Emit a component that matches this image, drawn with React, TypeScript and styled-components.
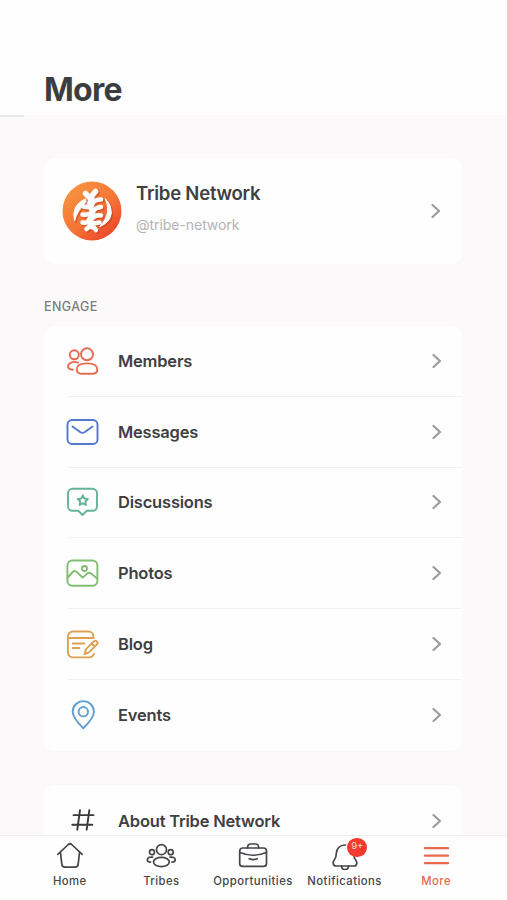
import React from "react";
import styled, { createGlobalStyle } from "styled-components";

const GlobalStyle = createGlobalStyle`
  * { box-sizing: border-box; }
  html, body { margin: 0; padding: 0; overflow: hidden; }
  body { font-family: Inter, "Liberation Sans", sans-serif; color: #3e4043; background: #fbf9fa; }
`;

const Screen = styled.div`
  height: 900px;
  display: flex;
  flex-direction: column;
  background: #fbf9fa;
  overflow: hidden;
`;
const Header = styled.header`
  flex: none;
  height: 115px;
  padding: 69px 44px 0;
  background: #fefefe;
`;
const Title = styled.h1`
  margin: 0;
  font-size: 32px;
  line-height: 41px;
  font-weight: 700;
  letter-spacing: -0.7px;
  color: #3b3e41;
`;
const HeaderRule = styled.div`
  flex: none;
  width: 24px;
  height: 2px;
  background: #e9e8e9;
`;
const Content = styled.main`
  flex: 1;
  min-height: 0;
  overflow: hidden;
  padding: 41px 45px 0 44px;
`;
const Card = styled.section`
  background: #fefefe;
  border-radius: 10px;
`;
const Profile = styled(Card)`
  height: 106px;
  display: flex;
  align-items: center;
  padding: 0 21px 1px 18px;
`;
const ProfileText = styled.div`
  flex: 1;
  padding: 0 0 6px 14px;
`;
const Name = styled.div`
  font-size: 18.5px;
  line-height: 24px;
  font-weight: 600;
  letter-spacing: -0.22px;
`;
const Handle = styled.div`
  margin-top: 10px;
  font-size: 14px;
  line-height: 20px;
  letter-spacing: -0.05px;
  color: #b4b3b5;
`;
const SectionLabel = styled.h2`
  margin: 34px 0 11px;
  font-size: 12.5px;
  line-height: 17px;
  font-weight: 500;
  letter-spacing: 0.4px;
  color: #7d7c7f;
`;
const Row = styled.div`
  height: 70.8px;
  display: flex;
  align-items: stretch;
  padding-left: 20px;
  &:last-child > div { border-bottom: none; }
`;
const RowBody = styled.div`
  flex: 1;
  display: flex;
  align-items: center;
  padding: 0 20px 0 0;
  margin-left: 4px;
  border-bottom: 1px solid #f3f2f3;
`;
const RowIcon = styled.span`
  display: flex;
  width: 36px;
  margin-left: -4px;
`;
const RowLabel = styled.span`
  flex: 1;
  padding-left: 18px;
  font-size: 16.5px;
  line-height: 24px;
  font-weight: 600;
  letter-spacing: -0.2px;
`;
const AboutCard = styled(Card)`
  margin-top: 34.500px;
`;
const TabBar = styled.nav`
  flex: none;
  height: 65px;
  padding: 0 25px 0 24px;
  border-top: 1px solid #f1eff1;
  background: #fefefe;
  display: grid;
  grid-template-columns: repeat(5, 1fr);
`;
const Tab = styled.div<{ $active?: boolean }>`
  position: relative;
  display: flex;
  flex-direction: column;
  align-items: center;
  padding-top: 4px;
  color: ${(p) => (p.$active ? "#e8694e" : "#44464a")};
`;
const TabLabel = styled.span`
  margin-top: 3px;
  font-size: 11.3px;
  line-height: 16px;
  font-weight: 500;
  letter-spacing: 0.45px;
  white-space: nowrap;
`;
const Badge = styled.span`
  position: absolute;
  top: 2px;
  left: 48.500px;
  width: 20px;
  height: 19px;
  border-radius: 10px;
  background: #f23a30;
  color: #ffd9d5;
  font-size: 9.5px;
  line-height: 16px;
  text-align: center;
`;
const Line = styled.svg`
  flex: none;
  display: block;
  fill: none;
  stroke: currentColor;
  stroke-width: 1.9;
  stroke-linecap: round;
  stroke-linejoin: round;
`;

const Chevron = () => (
  <Line width="10" height="16" viewBox="0 0 10 16" color="#9c9b9e">
    <path strokeWidth="2.2" d="M1.500 2 8 8l-6.500 6" />
  </Line>
);

const Logo = () => (
  <svg width="60" height="60" viewBox="0 0 60 60">
    <defs>
      <linearGradient id="ember" x1="0.15" y1="0.05" x2="0.85" y2="0.95">
        <stop offset="0" stopColor="#f7953f" />
        <stop offset="0.55" stopColor="#f57436" />
        <stop offset="1" stopColor="#ec4429" />
      </linearGradient>
      <g id="mark" strokeLinecap="round" strokeLinejoin="round">
        <g fill="none">
          <path strokeWidth="5.500" d="M23.500 12.500l4.500 4.500 5.500-6.500" />
          <path strokeWidth="5" d="M30 16l-3 8 4 7-4 8 3 7" />
          <path strokeWidth="4.500" d="M21.500 25.500q8 2 9-2.500t8.500-4.500M20.500 33.500q7 1 10-3t8.500-4.500M20.500 41.500q7 1 9.500-3.500t9-3.500M24.500 48l5-4.500 4.500 5.500M31 42.500l6.500-1" />
        </g>
        <path strokeWidth="1" d="M23 18Q9 24 12.500 40q2.500-10 11.500-19zM43.500 18q7 14-6 28 15-7 11-20-1.500-5-5-8z" />
      </g>
    </defs>
    <circle cx="30" cy="30" r="29.500" fill="url(#ember)" />
    <use href="#mark" x="1.500" y="1.500" stroke="#bd3b22" fill="#bd3b22" opacity="0.5" />
    <use href="#mark" stroke="#fff" fill="#fff" />
  </svg>
);

const Members = () => (
  <Line width="36" height="32" viewBox="0 0 36 32" color="#e46b50">
    <circle cx="10.300" cy="9.800" r="4.500" />
    <circle cx="23" cy="9.300" r="6" />
    <path d="M23 18.400c6.300 0 10.300 2.300 10.300 6 0 3-2.200 4.400-5.500 4.400h-9.600c-3.300 0-5.500-1.400-5.500-4.400 0-3.700 4-6 10.300-6Z" />
    <path d="M14 17.600c-5.300-1.900-9.900.600-10 4 0 1.800 1.800 2.900 4.800 3.100" />
  </Line>
);
const Mail = () => (
  <Line width="36" height="32" viewBox="0 0 36 32" color="#5279cc">
    <rect x="3.500" y="4" width="30" height="24" rx="4.500" />
    <path d="m8.500 10.500 8 5.700q2 1.300 4 0l8-5.700" />
  </Line>
);
const Discussion = () => (
  <Line width="36" height="32" viewBox="0 0 36 32" color="#63b39a">
    <path d="M8.500 2.800h20a4.500 4.500 0 0 1 4.500 4.500v13a4.500 4.500 0 0 1-4.500 4.500h-5.700l-4.300 4.200-4.300-4.200H8.500A4.500 4.500 0 0 1 4 20.300v-13a4.500 4.500 0 0 1 4.500-4.500Z" />
    <path d="m18.800 9.300 1.500 3.200 3.500.5-2.500 2.500.6 3.500-3.100-1.700-3.100 1.700.6-3.500-2.500-2.500 3.500-.5Z" />
  </Line>
);
const Photos = () => (
  <Line width="36" height="32" viewBox="0 0 36 32" color="#80bd70">
    <rect x="3.400" y="3.500" width="30" height="25.300" rx="5" />
    <circle cx="20.500" cy="11.500" r="2.500" />
    <path d="M3.800 20.500 8.700 15q2-2 4.300.300l5.700 5.300 4.500-4q1.800-1.500 3.800 0l6.200 5" />
  </Line>
);
const Blog = () => (
  <Line width="36" height="32" viewBox="0 0 36 32" color="#dea052">
    <path d="M29.500 9.500v-1a5 5 0 0 0-5-5H8.900a5 5 0 0 0-5 5v15.900a5 5 0 0 0 5 5H25q4 0 5-3.800M4 10h25.500M8.800 15.500h11.500M8.800 20h6.500" />
    <path d="m20.500 26.200 1.500-5 8-8q1.300-1.200 2.800.200t.1 2.900l-7.900 8Zm7.200-10.700 3 3" />
  </Line>
);
const Pin = () => (
  <Line width="36" height="32" viewBox="0 0 36 32" color="#609fd2">
    <path d="M19.300 29.200C14.500 24.500 8.700 18.500 8.700 12.700a10.600 10.600 0 0 1 21.200 0c0 5.800-5.800 11.800-10.600 16.500Z" />
    <circle cx="19.300" cy="12.700" r="4.700" />
  </Line>
);
const Hash = () => (
  <Line width="36" height="32" viewBox="0 0 36 32" color="#37393c">
    <path d="m16 5.200-2.700 19.500M25.300 5.200l-2.600 19.500M9.500 10.100h20M8.300 19.700h20" />
  </Line>
);

const Home = () => (
  <Line width="30" height="30" viewBox="0 0 30 30">
    <path strokeWidth="1.700" d="M2.800 14.300 13.300 4.500q1.700-1.500 3.400 0l10.500 9.800M5.500 12.500l1.300 11.700q.3 3 3.300 3h9.800q3 0 3.300-3l1.300-11.700" />
  </Line>
);
const Tribes = () => (
  <Line width="30" height="30" viewBox="0 0 30 30">
    <g strokeWidth="1.700">
      <circle cx="15.500" cy="9.700" r="5" />
      <circle cx="6" cy="12.200" r="2.500" />
      <circle cx="24.700" cy="12.200" r="2.500" />
      <ellipse cx="15.400" cy="22" rx="7.900" ry="4.700" />
      <path d="M6.500 17.200c-2.800-.500-5.200.600-5.200 2.700 0 1.200 1.300 2 3.200 2.300M24 17.200c2.800-.500 5.200.600 5.200 2.700 0 1.200-1.300 2-3.200 2.300" />
    </g>
  </Line>
);
const Briefcase = () => (
  <Line width="30" height="30" viewBox="0 0 30 30">
    <g strokeWidth="1.700">
      <rect x="1.700" y="8" width="26.800" height="18.400" rx="3" />
      <path d="M9.500 8q0-4 3-4h5.200q3 0 3 4M2 12.500q13 5.500 26.200 0M11.200 18.700q4 1.700 8 0" />
    </g>
  </Line>
);
const Bell = () => (
  <Line width="30" height="30" viewBox="0 0 30 30">
    <g strokeWidth="1.700">
      <path d="M15.500 5C9.500 4.800 6.300 9 6.300 13.500c0 3.300-.500 4.700-2 6.500-1.700 2-1.600 6 1.700 6h18c3.300 0 3.400-4 1.700-6-1-1.200-1.500-2-1.700-3.500" />
      <path d="M11.500 26.200c.300 4.500 6.700 4.500 7 0" />
    </g>
  </Line>
);
const Menu = () => (
  <Line width="30" height="30" viewBox="0 0 30 30">
    <path strokeWidth="2.300" d="M4 8.200h23M4 15.700h23M4 23.200h23" />
  </Line>
);

const items = [
  { label: "Members", Icon: Members },
  { label: "Messages", Icon: Mail },
  { label: "Discussions", Icon: Discussion },
  { label: "Photos", Icon: Photos },
  { label: "Blog", Icon: Blog },
  { label: "Events", Icon: Pin },
];

const tabs = [
  { label: "Home", Icon: Home },
  { label: "Tribes", Icon: Tribes },
  { label: "Opportunities", Icon: Briefcase },
  { label: "Notifications", Icon: Bell, badge: "9+" },
  { label: "More", Icon: Menu, active: true },
];

function MenuRow({ label, Icon }: { label: string; Icon: React.ComponentType }) {
  return (
    <Row>
      <RowBody>
        <RowIcon><Icon /></RowIcon>
        <RowLabel>{label}</RowLabel>
        <Chevron />
      </RowBody>
    </Row>
  );
}

export default function App() {
  return (
    <>
      <GlobalStyle />
      <Screen>
        <Header><Title>More</Title></Header>
        <HeaderRule />
        <Content>
          <Profile>
            <Logo />
            <ProfileText>
              <Name>Tribe Network</Name>
              <Handle>@tribe-network</Handle>
            </ProfileText>
            <Chevron />
          </Profile>
          <SectionLabel>ENGAGE</SectionLabel>
          <Card>
            {items.map((item) => <MenuRow key={item.label} {...item} />)}
          </Card>
          <AboutCard>
            <MenuRow label="About Tribe Network" Icon={Hash} />
          </AboutCard>
        </Content>
        <TabBar>
          {tabs.map(({ label, Icon, badge, active }) => (
            <Tab key={label} $active={active}>
              <Icon />
              {badge && <Badge>{badge}</Badge>}
              <TabLabel>{label}</TabLabel>
            </Tab>
          ))}
        </TabBar>
      </Screen>
    </>
  );
}
